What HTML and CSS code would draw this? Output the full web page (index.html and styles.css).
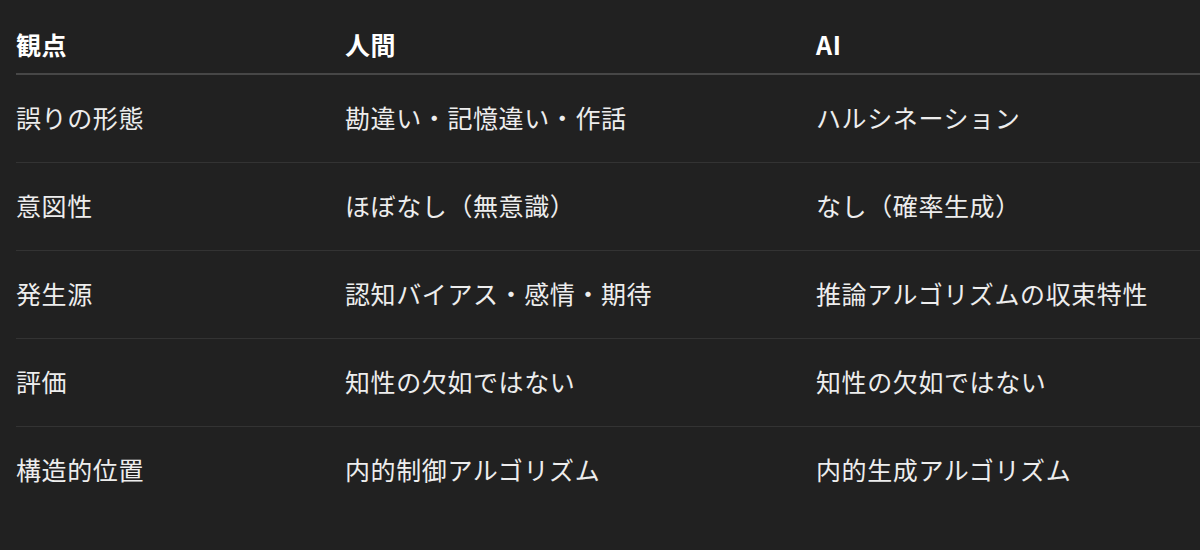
FILE: index.html
```html
<!DOCTYPE html>
<html lang="ja">
<head>
<meta charset="utf-8">
<link rel="stylesheet" href="styles.css">
</head>
<body>
<table class="cmp">
  <thead>
    <tr><th class="c1">観点</th><th class="c2">人間</th><th class="c3">AI</th></tr>
  </thead>
  <tbody>
    <tr><td>誤りの形態</td><td>勘違い・記憶違い・作話</td><td>ハルシネーション</td></tr>
    <tr><td>意図性</td><td>ほぼなし（無意識）</td><td>なし（確率生成）</td></tr>
    <tr><td>発生源</td><td>認知バイアス・感情・期待</td><td>推論アルゴリズムの収束特性</td></tr>
    <tr><td>評価</td><td>知性の欠如ではない</td><td>知性の欠如ではない</td></tr>
    <tr><td>構造的位置</td><td>内的制御アルゴリズム</td><td>内的生成アルゴリズム</td></tr>
  </tbody>
</table>
</body>
</html>
```
FILE: styles.css
```css
html, body {
  margin: 0;
  padding: 0;
  background: #212121;
  overflow: hidden;
}
body {
  padding: 26px 0 0 16px;
  font-family: "Noto Sans CJK JP", "Noto Sans", sans-serif;
  color: #ededed;
}
.cmp {
  border-collapse: collapse;
  width: 1230px;
  table-layout: fixed;
  font-size: 25px;
  letter-spacing: 0.6px;
}
.c1 { width: 329px; }
.c2 { width: 471px; }
.cmp th {
  text-align: left;
  font-weight: 700;
  color: #ffffff;
  padding: 0 0 11px 0;
  line-height: 36px;
  border-bottom: 2px solid #474747;
}
.cmp td {
  padding: 24px 0 27px 0;
  line-height: 36px;
  border-bottom: 1px solid #333333;
  white-space: nowrap;
}
.cmp tbody tr:last-child td {
  border-bottom: none;
}
```
